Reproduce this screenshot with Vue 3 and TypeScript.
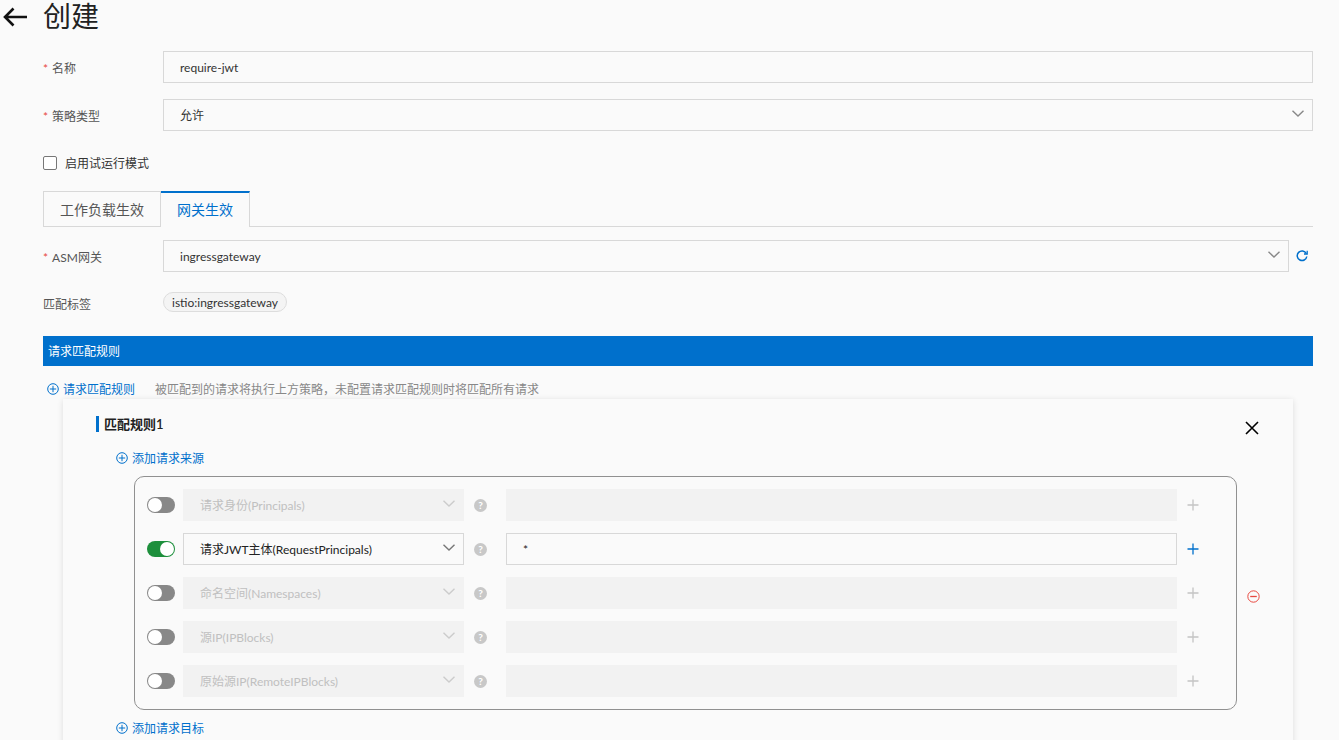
<script setup lang="ts">
import { ref } from 'vue'

const sources = ref([
  { id: 1, label: '请求身份(Principals)', on: false, value: '' },
  { id: 2, label: '请求JWT主体(RequestPrincipals)', on: true, value: '*' },
  { id: 3, label: '命名空间(Namespaces)', on: false, value: '' },
  { id: 4, label: '源IP(IPBlocks)', on: false, value: '' },
  { id: 5, label: '原始源IP(RemoteIPBlocks)', on: false, value: '' },
])
</script>

<template>
  <div class="page">
    <header class="head">
      <svg class="back" width="24" height="20" viewBox="0 0 24 20" fill="none" stroke="#111" stroke-width="2.6">
        <path d="M24 10H2M10.500 1.500L2 10l8.500 8.500" />
      </svg>
      <h1>创建</h1>
    </header>

    <div class="form-row first">
      <label class="label"><i>*</i>名称</label>
      <div class="field">require-jwt</div>
    </div>
    <div class="form-row">
      <label class="label"><i>*</i>策略类型</label>
      <div class="field select">
        允许
        <svg class="chev" width="12" height="7" viewBox="0 0 12 7" fill="none" stroke="#888" stroke-width="1.4"><path d="M.5.8L6 6l5.500-5.200" /></svg>
      </div>
    </div>

    <div class="check-row">
      <span class="checkbox"></span>
      <span class="check-text">启用试运行模式</span>
    </div>

    <div class="tabs">
      <div class="tab">工作负载生效</div>
      <div class="tab active">网关生效</div>
    </div>

    <div class="form-row gateway">
      <label class="label"><i>*</i>ASM网关</label>
      <div class="field select">
        ingressgateway
        <svg class="chev" width="12" height="7" viewBox="0 0 12 7" fill="none" stroke="#888" stroke-width="1.4"><path d="M.5.8L6 6l5.500-5.200" /></svg>
      </div>
      <svg class="refresh" width="12" height="12" viewBox="0 0 12 12" fill="none" stroke="#0070cc" stroke-width="1.5">
        <path d="M10.300 3.500A4.800 4.800 0 1 0 10.800 6.500" />
        <path d="M11.200 .8v3.200H8" stroke-width="1.300" />
      </svg>
    </div>

    <div class="tag-row">
      <label class="label">匹配标签</label>
      <span class="tag">istio:ingressgateway</span>
    </div>

    <div class="bar">请求匹配规则</div>

    <div class="add-row">
      <a class="add">
        <svg width="12" height="12" viewBox="0 0 12 12" fill="none" stroke="#0070cc" stroke-width="1"><circle cx="6" cy="6" r="5.300" /><path d="M2.800 6h6.400M6 2.800v6.400" /></svg>
        请求匹配规则
      </a>
      <span class="hint">被匹配到的请求将执行上方策略，未配置请求匹配规则时将匹配所有请求</span>
    </div>

    <section class="card">
      <div class="card-head">
        <h3>匹配规则1</h3>
        <svg width="16" height="16" viewBox="0 0 16 16" fill="none" stroke="#000" stroke-width="1.6"><path d="M2 2l12 12M14 2L2 14" /></svg>
      </div>

      <a class="add source-add">
        <svg width="12" height="12" viewBox="0 0 12 12" fill="none" stroke="#0070cc" stroke-width="1"><circle cx="6" cy="6" r="5.300" /><path d="M2.800 6h6.400M6 2.800v6.400" /></svg>
        添加请求来源
      </a>

      <div class="box-wrap">
        <div class="box">
          <div v-for="s in sources" :key="s.id" class="src-row" :class="{ off: !s.on }">
            <span class="toggle" :class="{ on: s.on }"><b></b></span>
            <div class="src-select">
              {{ s.label }}
              <svg class="chev" width="12" height="7" viewBox="0 0 12 7" fill="none" :stroke="s.on ? '#777' : '#ccc'" stroke-width="1.4"><path d="M.5.8L6 6l5.500-5.200" /></svg>
            </div>
            <span class="help">?</span>
            <div class="src-input">{{ s.value }}</div>
            <svg class="plus" width="12" height="12" viewBox="0 0 12 12" fill="none" :stroke="s.on ? '#0070cc' : '#c4c4c4'" stroke-width="1.3"><path d="M.5 6h11M6 .5v11" /></svg>
          </div>
        </div>
        <svg class="minus" width="13" height="13" viewBox="0 0 13 13" fill="none" stroke="#e8483f" stroke-width="1"><circle cx="6.500" cy="6.500" r="5.700" /><path d="M3.200 6.500h6.600" stroke-width="1.300" /></svg>
      </div>

      <a class="add target-add">
        <svg width="12" height="12" viewBox="0 0 12 12" fill="none" stroke="#0070cc" stroke-width="1"><circle cx="6" cy="6" r="5.300" /><path d="M2.800 6h6.400M6 2.800v6.400" /></svg>
        添加请求目标
      </a>
    </section>
  </div>
</template>

<style scoped>
.page {
  height: 740px;
  overflow: hidden;
  box-sizing: border-box;
  padding: 0 26px 0 43px;
  background: #fafafa;
  color: #333;
  font-size: 12px;
  font-family: Lato, "Noto Sans CJK SC", sans-serif;
}

.head {
  display: flex;
  align-items: center;
  height: 33px;
  margin-left: -40px;
}
.back { margin-right: 16px; }
.head h1 {
  margin: 0;
  font-size: 28px;
  font-weight: 400;
  line-height: 33px;
  color: #222;
}

.form-row {
  display: flex;
  align-items: center;
  margin-top: 16px;
}
.form-row.first { margin-top: 18px; }
.form-row.gateway { margin-top: 13px; }

.label {
  flex: 0 0 120px;
  color: #555;
}
.label i {
  margin-right: 4px;
  font-style: normal;
  color: #e8483f;
}

.field {
  flex: 1;
  position: relative;
  box-sizing: border-box;
  height: 32px;
  line-height: 32px;
  padding-left: 16px;
  border: 1px solid #d8d8d8;
}
.chev {
  position: absolute;
  right: 8px;
  top: 50%;
  margin-top: -5px;
}
.refresh { margin: 0 5px 0 7px; }

.check-row {
  display: flex;
  align-items: center;
  gap: 8px;
  height: 16px;
  margin-top: 24px;
}
.check-text { padding-bottom: 2px; }
.checkbox {
  box-sizing: border-box;
  width: 14px;
  height: 14px;
  border: 1px solid #777;
  border-radius: 2px;
  background: #fff;
}

.tabs {
  display: flex;
  height: 36px;
  margin-top: 20px;
  box-sizing: border-box;
  border-bottom: 1px solid #d8d8d8;
}
.tab {
  box-sizing: border-box;
  height: 36px;
  padding: 0 16px;
  line-height: 35px;
  font-size: 14px;
  color: #555;
  border: 1px solid #d8d8d8;
}
.tab.active {
  color: #0070cc;
  background: #fafafa;
  border-left: 0;
  border-top: 2px solid #0070cc;
  border-bottom: 0;
  line-height: 34px;
}

.tag-row {
  display: flex;
  align-items: center;
  height: 20px;
  margin-top: 20px;
}
.tag-row .label { padding-top: 3px; }
.tag {
  box-sizing: border-box;
  height: 20px;
  padding: 0 8px;
  line-height: 19px;
  border: 1px solid #ddd;
  border-radius: 10px;
  background: #f4f4f4;
}

.bar {
  height: 30px;
  margin-top: 24px;
  padding-left: 5px;
  line-height: 32px;
  color: #fff;
  background: #0070cc;
}

.add-row {
  display: flex;
  align-items: center;
  height: 16px;
  margin-top: 15px;
  padding-left: 4px;
}
.add {
  display: inline-flex;
  align-items: center;
  box-sizing: border-box;
  gap: 3px;
  padding-bottom: 2px;
  color: #0070cc;
}
.add svg { margin: 2px 1px 0 0; }
.hint {
  margin-left: 20px;
  padding-bottom: 2px;
  color: #888;
}

.card {
  margin: 2px 20px 0 20px;
  padding: 17px 33px 0;
  height: 400px;
  background: #fafafa;
  box-shadow: 0 1px 6px rgba(0, 0, 0, 0.12);
}
.card-head {
  display: flex;
  align-items: flex-start;
  justify-content: space-between;
  height: 16px;
}
.card-head h3 {
  margin: 0;
  padding-left: 5px;
  height: 16px;
  line-height: 16px;
  font-size: 13px;
  font-weight: 600;
  color: #222;
  border-left: 3px solid #0070cc;
}
.card-head svg { margin-top: 4px; }

.source-add {
  display: flex;
  margin: 18px 0 0 20px;
  height: 16px;
}
.box-wrap {
  display: flex;
  align-items: center;
  margin: 10px 0 0 38px;
}
.box {
  box-sizing: border-box;
  width: 1104px;
  height: 234px;
  padding: 12px 12px;
  border: 1px solid #909090;
  border-radius: 10px;
}
.minus {
  margin: 7px 0 0 10px;
}
.target-add {
  display: flex;
  margin: 10px 0 0 20px;
  height: 16px;
}

.src-row {
  display: flex;
  align-items: center;
  height: 32px;
  margin-bottom: 12px;
}
.toggle {
  display: flex;
  align-items: center;
  box-sizing: border-box;
  width: 28px;
  height: 16px;
  padding: 1px;
  border-radius: 8px;
  background: #888;
}
.toggle b {
  width: 14px;
  height: 14px;
  border-radius: 50%;
  background: #fff;
}
.toggle.on {
  justify-content: flex-end;
  background: #1d8f3c;
}
.src-select {
  position: relative;
  box-sizing: border-box;
  width: 281px;
  height: 32px;
  margin-left: 8px;
  padding-left: 16px;
  line-height: 32px;
  color: #222;
  border: 1px solid #d8d8d8;
}
.help {
  flex: none;
  width: 13px;
  height: 13px;
  margin: 0 19px 0 10px;
  border-radius: 50%;
  background: #c8c8c8;
  color: #fff;
  font-size: 10px;
  font-weight: 700;
  line-height: 13px;
  text-align: center;
}
.src-input {
  box-sizing: border-box;
  width: 671px;
  height: 32px;
  padding-left: 16px;
  line-height: 32px;
  color: #222;
  border: 1px solid #d8d8d8;
}
.plus { margin-left: 10px; }

.src-row.off .src-select,
.src-row.off .src-input {
  color: #c0c0c0;
  background: #f2f2f2;
  border-color: #f2f2f2;
}
</style>

<style>
html, body { background: #fafafa; }
</style>
